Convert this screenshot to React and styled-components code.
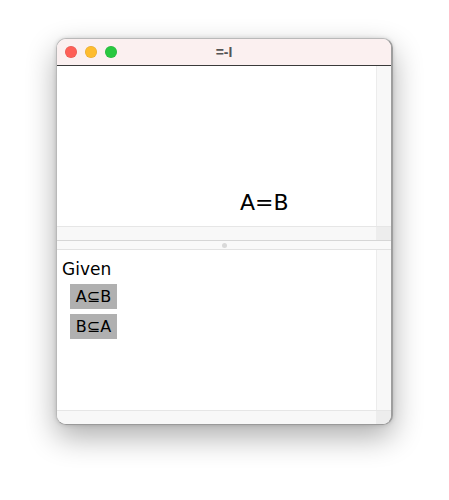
import React from "react";
import styled, { createGlobalStyle } from "styled-components";

const Global = createGlobalStyle`
  html, body { margin: 0; padding: 0; background: #ffffff; }
  body { font-family: "DejaVu Sans", "Liberation Sans", sans-serif; }
`;

const Page = styled.div`
  width: 449px;
  height: 500px;
  padding: 38px 0 0 56px;
  box-sizing: border-box;
`;

const Window = styled.div`
  width: 337px;
  height: 387px;
  box-sizing: border-box;
  border: 1px solid #b9b9b9;
  border-right: 2px solid #9e9e9e;
  border-bottom: 1px solid #9a9a9a;
  border-radius: 10px;
  overflow: hidden;
  display: flex;
  flex-direction: column;
  background: #fff;
  box-shadow: 0 12px 30px rgba(0, 0, 0, 0.32), 0 0 4px rgba(0, 0, 0, 0.15);
`;

const TitleBar = styled.div`
  height: 26px;
  flex: none;
  background: #fbf0f0;
  border-bottom: 1px solid #3a3a3a;
  display: flex;
  align-items: center;
  padding-left: 8px;
  position: relative;
`;

const Light = styled.span`
  width: 12px;
  height: 12px;
  border-radius: 50%;
  background: ${(p) => p.$c};
  box-shadow: inset 0 0 0 0.5px rgba(0, 0, 0, 0.12);
  margin-right: 8px;
`;

const Title = styled.div`
  position: absolute;
  left: 0;
  right: 0;
  top: 0;
  bottom: 0;
  display: flex;
  align-items: center;
  justify-content: center;
  font-family: "Liberation Sans", sans-serif;
  font-weight: bold;
  font-size: 14px;
  color: #555;
  pointer-events: none;
`;

const Pane = styled.div`
  height: ${(p) => p.$h}px;
  flex: none;
  display: grid;
  grid-template-columns: 1fr 15px;
  grid-template-rows: 1fr 14px;
`;

const Content = styled.div`
  background: #fff;
  overflow: hidden;
`;

const VScroll = styled.div`
  background: #f8f8f8;
  border-left: 1px solid #ececec;
`;

const HScroll = styled.div`
  background: #f8f8f8;
  border-top: 1px solid #e6e6e6;
`;

const Corner = styled.div`
  background: #ededed;
  border-top: 1px solid #e6e6e6;
`;

const Divider = styled.div`
  height: 8px;
  flex: none;
  background: #f9f9f9;
  border-top: 1px solid #d6d6d6;
  border-bottom: 1px solid #e2e2e2;
  display: flex;
  align-items: center;
  justify-content: center;
`;

const Dot = styled.span`
  width: 5px;
  height: 5px;
  border-radius: 50%;
  background: #d9d9d9;
`;

const Formula = styled.div`
  padding: 124px 0 0 183px;
  font-size: 22px;
  line-height: 26px;
  color: #000;
`;

const GivenArea = styled.div`
  padding: 9px 0 0 5px;
  display: flex;
  flex-direction: column;
  align-items: flex-start;
`;

const Label = styled.div`
  font-size: 17px;
  line-height: 21px;
  color: #000;
  margin-bottom: 4px;
`;

const Items = styled.div`
  padding-left: 8px;
  display: flex;
  flex-direction: column;
  gap: 5px;
`;

const Chip = styled.div`
  width: 47px;
  height: 25px;
  background: #b0b0b0;
  display: flex;
  align-items: center;
  justify-content: center;
  font-size: 16px;
  color: #000;
`;

export default function App() {
  return (
    <Page>
      <Global />
      <Window>
        <TitleBar>
          <Light $c="#fe5f57" />
          <Light $c="#febc2e" />
          <Light $c="#28c840" />
          <Title>=-I</Title>
        </TitleBar>
        <Pane $h={174}>
          <Content>
            <Formula>A=B</Formula>
          </Content>
          <VScroll />
          <HScroll />
          <Corner />
        </Pane>
        <Divider>
          <Dot />
        </Divider>
        <Pane $h={174}>
          <Content>
            <GivenArea>
              <Label>Given</Label>
              <Items>
                <Chip>A⊆B</Chip>
                <Chip>B⊆A</Chip>
              </Items>
            </GivenArea>
          </Content>
          <VScroll />
          <HScroll />
          <Corner />
        </Pane>
      </Window>
    </Page>
  );
}
